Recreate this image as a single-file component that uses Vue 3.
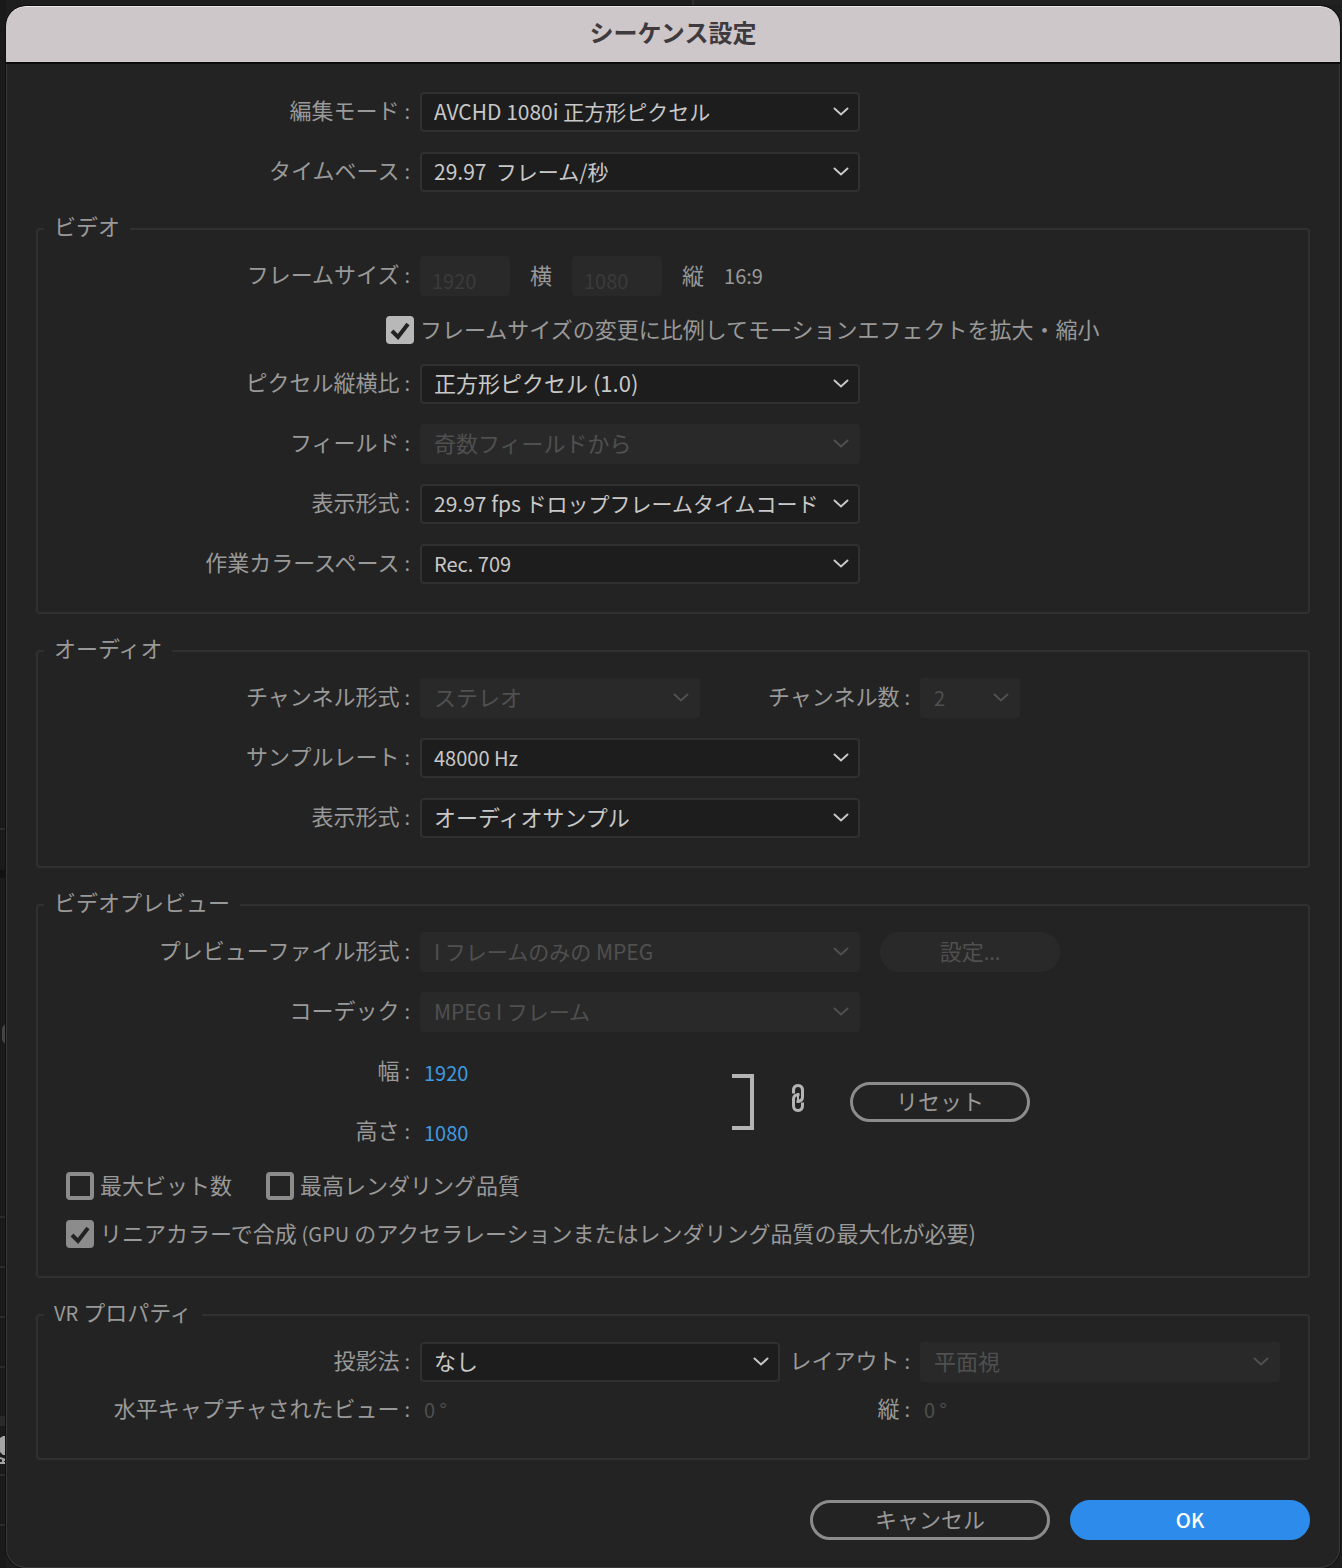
<script setup>
import { ref } from 'vue'

const scaleMotion = ref(true)
const maxDepth = ref(false)
const maxQuality = ref(false)
const linearColor = ref(true)
const previewWidth = ref('1920')
const previewHeight = ref('1080')

const generalRows = [
  { id: 'mode', label: '編集モード', value: 'AVCHD 1080i 正方形ピクセル', size: 'mixed' },
  { id: 'timebase', label: 'タイムベース', value: '29.97\u00a0 フレーム/秒', size: 'mixed' },
]
const videoRows = [
  { id: 'par', label: 'ピクセル縦横比', value: '正方形ピクセル (1.0)' },
  { id: 'field', label: 'フィールド', value: '奇数フィールドから', disabled: true },
  { id: 'vformat', label: '表示形式', value: '29.97 fps ドロップフレームタイムコード', size: 'mixed' },
  { id: 'color', label: '作業カラースペース', value: 'Rec. 709', size: 'latin' },
]
const audioRows = [
  { id: 'rate', label: 'サンプルレート', value: '48000 Hz', size: 'latin' },
  { id: 'aformat', label: '表示形式', value: 'オーディオサンプル' },
]
</script>

<template>
  <div class="desktop">
    <svg class="symbols" aria-hidden="true">
      <symbol id="chevron" viewBox="0 0 16 10">
        <path d="M1.5 1.5 L8 7.5 L14.5 1.5" fill="none" stroke="currentColor" stroke-width="2" stroke-linecap="round" />
      </symbol>
    </svg>

    <svg class="backdrop" width="6" height="1568" aria-hidden="true">
      <rect width="6" height="1568" fill="#1b1a1b" />
      <rect y="870" width="6" height="8" fill="#121212" />
      <path d="M0 829h6M0 1217h6M0 1267h6M0 1317h6M0 1367h6M0 1475h6M0 1525h6" stroke="#2b2b2b" stroke-width="2" />
      <rect y="1416" width="6" height="10" fill="#2a2a2a" />
      <path d="M6 1024 L4 1025 L2 1028 V1040 L4 1043 L6 1044Z" fill="#444" />
      <path d="M0 1438 L3 1436 H6 V1455 H3 L0 1452Z" fill="#a5a5a5" />
      <path d="M0 1458 L6 1460 M0 1463h6 M3 1459v4" stroke="#a5a5a5" stroke-width="2" />
    </svg>
    <i class="panel-edge"></i>

    <form class="dialog" @submit.prevent>
      <header class="titlebar"><h1>シーケンス設定</h1></header>

      <div class="body">
        <div class="general stack">
          <div v-for="r in generalRows" :key="r.id" class="row">
            <label class="name" :for="r.id">{{ r.label }}<span class="colon">:</span></label>
            <span class="pick">
              <select :id="r.id" :class="r.size"><option>{{ r.value }}</option></select>
              <svg class="chev"><use href="#chevron" /></svg>
            </span>
          </div>
        </div>

        <fieldset>
          <legend>ビデオ</legend>
          <div class="stack">
            <div class="row">
              <label class="name" for="fw">フレームサイズ<span class="colon">:</span></label>
              <div class="frame-size">
                <input id="fw" class="box" type="text" value="1920" disabled />
                <label for="fw">横</label>
                <input id="fh" class="box" type="text" value="1080" disabled />
                <label for="fh">縦</label>
                <span class="latin ratio">16:9</span>
              </div>
            </div>
            <label class="check bright indent">
              <input v-model="scaleMotion" type="checkbox" />
              <svg class="tick" viewBox="0 0 28 28"><path d="M6 15 L12 21 L22 8" /></svg>
              <span>フレームサイズの変更に比例してモーションエフェクトを拡大・縮小</span>
            </label>
            <div v-for="r in videoRows" :key="r.id" class="row">
              <label class="name" :for="r.id">{{ r.label }}<span class="colon">:</span></label>
              <span class="pick" :class="{ off: r.disabled }">
                <select :id="r.id" :class="r.size" :disabled="r.disabled"><option>{{ r.value }}</option></select>
                <svg class="chev"><use href="#chevron" /></svg>
              </span>
            </div>
          </div>
        </fieldset>

        <fieldset>
          <legend>オーディオ</legend>
          <div class="stack">
            <div class="row">
              <label class="name" for="channels">チャンネル形式<span class="colon">:</span></label>
              <span class="pick short off">
                <select id="channels" disabled><option>ステレオ</option></select>
                <svg class="chev"><use href="#chevron" /></svg>
              </span>
              <label class="name count" for="count">チャンネル数<span class="colon">:</span></label>
              <span class="pick tiny off">
                <select id="count" class="latin" disabled><option>2</option></select>
                <svg class="chev"><use href="#chevron" /></svg>
              </span>
            </div>
            <div v-for="r in audioRows" :key="r.id" class="row">
              <label class="name" :for="r.id">{{ r.label }}<span class="colon">:</span></label>
              <span class="pick">
                <select :id="r.id" :class="r.size"><option>{{ r.value }}</option></select>
                <svg class="chev"><use href="#chevron" /></svg>
              </span>
            </div>
          </div>
        </fieldset>

        <fieldset>
          <legend>ビデオプレビュー</legend>
          <div class="stack">
            <div class="row">
              <label class="name" for="pformat">プレビューファイル形式<span class="colon">:</span></label>
              <span class="pick off">
                <select id="pformat" class="mixed" disabled><option>I フレームのみの MPEG</option></select>
                <svg class="chev"><use href="#chevron" /></svg>
              </span>
              <button class="btn quiet" type="button" disabled>設定<span class="latin">...</span></button>
            </div>
            <div class="row">
              <label class="name" for="codec">コーデック<span class="colon">:</span></label>
              <span class="pick off">
                <select id="codec" class="mixed" disabled><option>MPEG I フレーム</option></select>
                <svg class="chev"><use href="#chevron" /></svg>
              </span>
            </div>
            <div class="dimensions">
              <div class="stack">
                <div class="row">
                  <label class="name" for="pw">幅<span class="colon">:</span></label>
                  <input id="pw" v-model="previewWidth" class="scrub" type="text" />
                </div>
                <div class="row">
                  <label class="name" for="ph">高さ<span class="colon">:</span></label>
                  <input id="ph" v-model="previewHeight" class="scrub" type="text" />
                </div>
              </div>
              <span class="bracket"></span>
              <svg class="link" viewBox="0 0 16 36" aria-label="縦横比を固定">
                <g fill="none" stroke="#b4b4b4" stroke-width="3">
                  <path d="M3.5 9.5 V6.5 Q3.5 1.5 8 1.5 Q12.5 1.5 12.5 6.5 V13 Q12.5 17.5 6.5 17.5" />
                  <path d="M12.5 18.5 V21.5 Q12.5 26.5 8 26.5 Q3.5 26.5 3.5 21.5 V15 Q3.5 10.5 9.5 10.5" />
                  <path d="M8 9 V19" stroke-width="2" />
                </g>
              </svg>
              <button class="btn reset" type="button">リセット</button>
            </div>
            <div class="checks">
              <label class="check">
                <input v-model="maxDepth" type="checkbox" />
                <span>最大ビット数</span>
              </label>
              <label class="check">
                <input v-model="maxQuality" type="checkbox" />
                <span>最高レンダリング品質</span>
              </label>
            </div>
            <label class="check">
              <input v-model="linearColor" type="checkbox" />
              <svg class="tick" viewBox="0 0 28 28"><path d="M6 15 L12 21 L22 8" /></svg>
              <span>リニアカラーで合成 <span class="latin">(GPU</span> のアクセラレーションまたはレンダリング品質の最大化が必要)</span>
            </label>
          </div>
        </fieldset>

        <fieldset>
          <legend><span class="latin">VR</span> プロパティ</legend>
          <div class="stack tight">
            <div class="row">
              <label class="name" for="projection">投影法<span class="colon">:</span></label>
              <span class="pick medium">
                <select id="projection"><option>なし</option></select>
                <svg class="chev"><use href="#chevron" /></svg>
              </span>
              <label class="name second" for="layout">レイアウト<span class="colon">:</span></label>
              <span class="pick wide off">
                <select id="layout" disabled><option>平面視</option></select>
                <svg class="chev"><use href="#chevron" /></svg>
              </span>
            </div>
            <div class="row">
              <span class="name">水平キャプチャされたビュー<span class="colon">:</span></span>
              <span class="degree medium">0 °</span>
              <span class="name second">縦<span class="colon">:</span></span>
              <span class="degree">0 °</span>
            </div>
          </div>
        </fieldset>

        <footer>
          <button class="btn cancel" type="button">キャンセル</button>
          <button class="btn ok" type="submit">OK</button>
        </footer>
      </div>
    </form>
  </div>
</template>

<style>
body {
  margin: 0;
  background: #1c1c1c;
}
</style>

<style scoped>
.desktop {
  position: relative;
  padding: 6px 2px 0 6px;
  background: #1e1e1e;
  color: #999;
  font: 22px/40px "Noto Sans CJK JP", "Noto Sans", sans-serif;
  overflow: hidden;
}
.desktop * {
  box-sizing: border-box;
}
.symbols {
  position: absolute;
  width: 0;
  height: 0;
}
.backdrop {
  position: absolute;
  left: 0;
  top: 0;
}
.panel-edge {
  position: absolute;
  left: 692px;
  right: 0;
  top: 0;
  height: 5px;
  border-left: 2px solid #2c2c2c;
  background: #212121;
}
.dialog {
  position: relative;
  border-radius: 20px;
  background: #232323;
  box-shadow: inset 0 0 0 1px #383838, 0 0 0 1px #101010;
  overflow: hidden;
}
.titlebar {
  height: 58px;
  border-top: 1px solid #ece8eb;
  border-bottom: 2px solid #0c0c0c;
  border-radius: 20px 20px 0 0;
  background: #cdc7ca;
  text-align: center;
}
h1 {
  margin: 0;
  color: #3f3a3d;
  font-size: 24px;
  font-weight: 700;
  line-height: 50px;
}
.body {
  padding: 28px 30px;
}
.general {
  padding-left: 30px;
}
.stack {
  display: flex;
  flex-direction: column;
  gap: 20px;
}
.stack.tight {
  gap: 8px;
}
.row {
  display: flex;
  height: 40px;
}
.name {
  flex: none;
  width: 344px;
  margin-right: 10px;
  line-height: 35px;
  text-align: right;
  white-space: nowrap;
}
.name.count {
  width: 210px;
}
.name.second {
  width: 130px;
}
.colon {
  margin-left: 5px;
  font-size: 20px;
}
.latin {
  font-size: 20px;
}
fieldset {
  min-width: 0;
  margin: 22px 0 0;
  padding: 12px 28px 28px;
  border: 2px solid #303030;
  border-radius: 4px;
}
legend {
  margin-left: -22px;
  padding: 0 10px;
  height: 30px;
  line-height: 23px;
}
.pick {
  position: relative;
  flex: none;
  width: 440px;
  color: #c8c8c8;
}
.pick.short {
  width: 280px;
}
.pick.tiny {
  width: 100px;
}
.medium {
  width: 360px;
}
.pick.wide {
  flex: 1;
  width: auto;
  max-width: 360px;
}
.pick.off {
  color: #505050;
}
select {
  display: block;
  width: 100%;
  height: 40px;
  margin: 0;
  padding: 0 32px 4px 12px;
  border: 2px solid #303030;
  border-radius: 4px;
  background: #1d1d1d;
  color: inherit;
  font: inherit;
  line-height: 32px;
  appearance: none;
  opacity: 1;
}
select.mixed {
  padding-bottom: 2px;
  font-size: 21px;
}
select.latin {
  padding-bottom: 0;
  font-size: 20px;
}
.off select {
  border-color: #292929;
  background: #292929;
}
.chev {
  position: absolute;
  right: 11px;
  top: 15px;
  width: 16px;
  height: 10px;
  pointer-events: none;
}
.frame-size {
  display: flex;
  gap: 20px;
  line-height: 36px;
}
.ratio {
  line-height: 40px;
}
.box {
  width: 90px;
  height: 40px;
  padding: 8px 12px 0;
  border: 0;
  border-radius: 4px;
  background: #292929;
  color: #3b3b3b;
  font: inherit;
  font-size: 20px;
}
.check {
  position: relative;
  display: flex;
  align-items: center;
  gap: 6px;
  height: 28px;
  line-height: 28px;
  white-space: nowrap;
}
.check > span {
  height: 32px;
}
.check.indent {
  margin-left: 320px;
}
.check input {
  flex: none;
  width: 28px;
  height: 28px;
  margin: 0;
  border: 4px solid #8c8c8c;
  border-radius: 4px;
  appearance: none;
}
.check input:checked {
  background: #8c8c8c;
}
.check.bright input {
  border-color: #b8b8b8;
}
.check.bright input:checked {
  background: #b8b8b8;
}
.tick {
  position: absolute;
  left: 0;
  top: 0;
  width: 28px;
  height: 28px;
  fill: none;
  stroke: #232323;
  stroke-width: 4;
  pointer-events: none;
}
.check input:not(:checked) + .tick {
  display: none;
}
.checks {
  display: flex;
  gap: 34px;
}
.btn {
  flex: none;
  width: 180px;
  height: 40px;
  padding: 0 0 4px;
  border: 3px solid #8c8c8c;
  border-radius: 20px;
  background: transparent;
  color: #999;
  font: inherit;
  line-height: 30px;
}
.btn.quiet {
  margin-left: 20px;
  border-color: #292929;
  background: #292929;
  color: #505050;
}
.dimensions {
  display: flex;
  align-items: center;
}
.scrub {
  width: 120px;
  padding: 2px 4px 0;
  border: 0;
  background: transparent;
  color: #3f9ae0;
  font: inherit;
  font-size: 20px;
}
.bracket {
  width: 22px;
  height: 56px;
  margin-left: 192px;
  border: 4px solid #b4b4b4;
  border-left: 0;
}
.link {
  width: 16px;
  height: 36px;
  margin-left: 36px;
}
.btn.reset {
  margin-left: 44px;
}
.degree {
  padding-left: 4px;
  color: #505050;
  font-size: 20px;
}
footer {
  display: flex;
  justify-content: flex-end;
  gap: 20px;
  margin-top: 40px;
}
footer .btn {
  width: 240px;
}
.btn.ok {
  padding: 0;
  border-color: #2d8ceb;
  background: #2d8ceb;
  color: #fff;
  font-size: 20px;
  font-weight: 500;
}
</style>
